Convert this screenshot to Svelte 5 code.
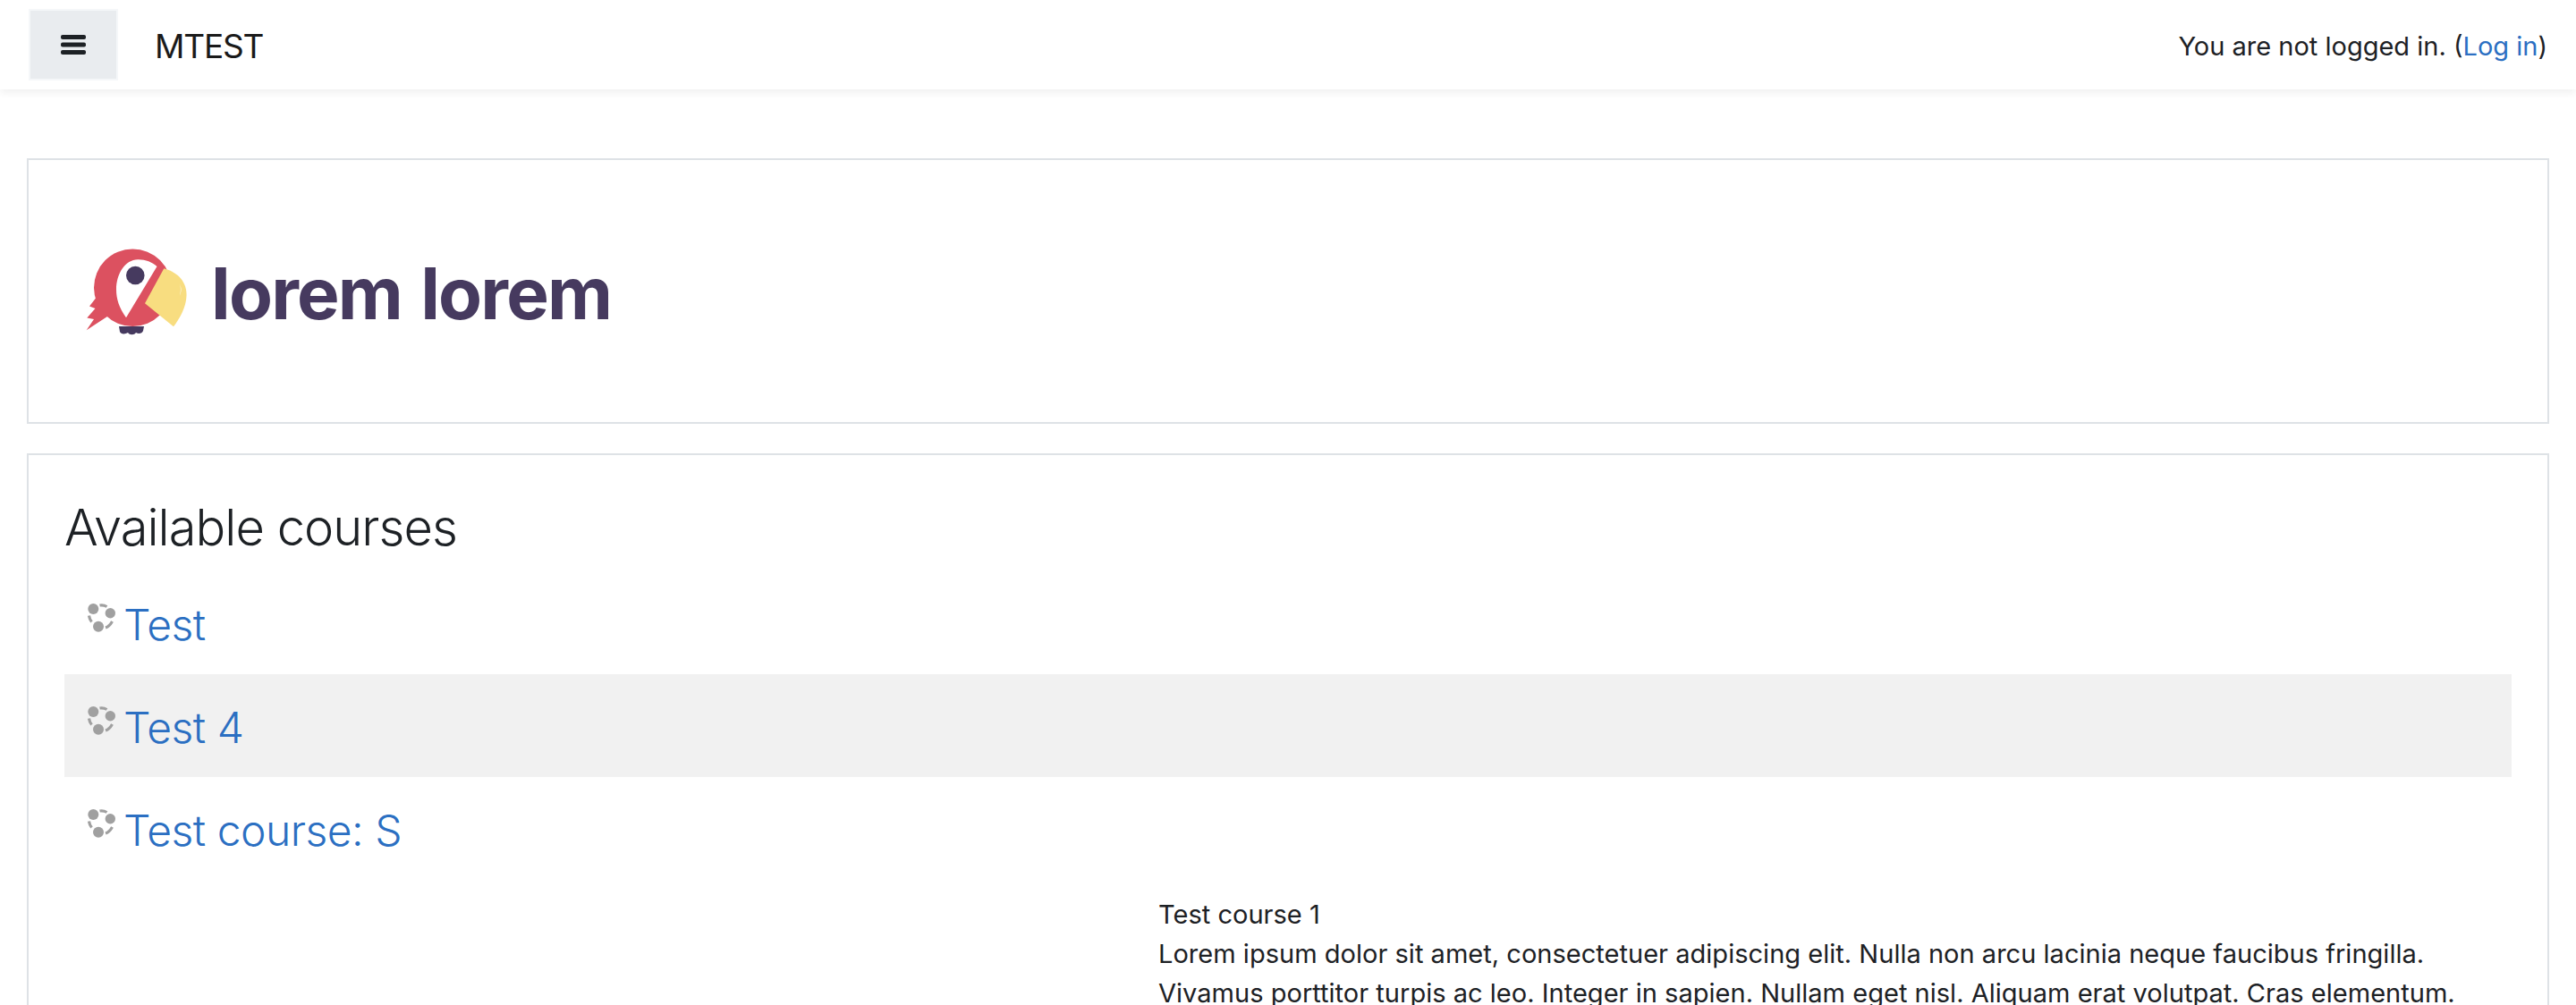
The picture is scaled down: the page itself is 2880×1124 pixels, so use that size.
<script lang="ts">
  const courses = [
    { name: 'Test', odd: false },
    { name: 'Test 4', odd: true },
    { name: 'Test course: S', odd: false },
  ];
</script>

<header class="navbar">
  <button class="toggle" aria-label="Side panel">
    <svg width="28" height="24" viewBox="0 0 28 24" aria-hidden="true">
      <rect y="1" width="28" height="5" rx="2" />
      <rect y="9.5" width="28" height="5" rx="2" />
      <rect y="18" width="28" height="5" rx="2" />
    </svg>
  </button>
  <span class="brand">MTEST</span>
  <span class="login">You are not logged in. (<a href="#login">Log in</a>)</span>
</header>

<main>
  <section class="card logo-card">
    <svg class="parrot" width="130" height="115" viewBox="0 0 130 115" aria-hidden="true">
      <path class="dark" d="M43 99h28l-1 5c-1 3-5 4-8 2-2 3-7 3-9 0-3 2-8 2-9-1z" />
      <path class="red" d="M30 88 6.700 103.300 15 91 7.300 89.500 16.500 79 10 76.500 17 67.500 28 60z" />
      <circle class="red" cx="58.300" cy="55.700" r="43.300" />
      <path class="white" d="M51 89.300C43 78 40 68 40 58 40 40 50 24.500 64 24.300 72 24 80 27 85.500 32z" />
      <circle class="dark" cx="61.300" cy="42" r="10.300" />
      <path class="beak" d="M93.300 34.300C110 39 119 50 118.500 65 118 78 111 90 104 99.300L72 73.300z" />
      <path class="white" d="M110 51c2.500 2 2.500 9 .8 14 2.200-4 2.500-11-.8-14z" />
    </svg>
    <span class="wordmark">lorem lorem</span>
  </section>

  <section class="card courses">
    <h2>Available courses</h2>
    {#each courses as course}
      <div class="course" class:odd={course.odd}>
        <svg class="course-icon" width="32" height="32" viewBox="0 0 32 32" aria-hidden="true">
          <circle cx="6.300" cy="6" r="6" />
          <circle cx="25.300" cy="10.700" r="5.700" />
          <circle cx="12" cy="25.700" r="6" />
          <path d="M13.500 2C16 1.500 19 2 21.500 3.500M1.500 13.500c.3 2.500 1.300 5 3 7M20 27c3-1 5.500-3.500 7.500-7" />
        </svg>
        <a href="#course">{course.name}</a>
      </div>
    {/each}
    <div class="summary">
      <p>Test course 1<br />Lorem ipsum dolor sit amet, consectetuer adipiscing elit. Nulla non arcu lacinia neque faucibus fringilla.<br />Vivamus porttitor turpis ac leo. Integer in sapien. Nullam eget nisl. Aliquam erat volutpat. Cras elementum.</p>
    </div>
  </section>
</main>

<style>
  :global(html), :global(body) {
    margin: 0;
    height: 1124px;
    overflow: hidden;
    background: #fff;
  }

  :global(body) {
    font-family: Inter, "Liberation Sans", sans-serif;
    font-size: 30px;
    line-height: 45px;
    color: #1d2125;
  }

  a {
    color: #2b6fc2;
    text-decoration: none;
  }

  .navbar {
    display: flex;
    align-items: center;
    height: 100px;
    padding: 0 32px;
    box-sizing: border-box;
    background: #fff;
    box-shadow: 0 4px 8px rgba(0, 0, 0, 0.06);
  }

  .toggle {
    display: flex;
    align-items: center;
    justify-content: center;
    width: 100px;
    height: 80px;
    padding: 0;
    background: #e9ecef;
    border: 2px solid #f5f7f9;
    box-sizing: border-box;
  }

  .toggle svg {
    fill: #1d2125;
  }

  .brand {
    margin-left: 41px;
    font-size: 37px;
    letter-spacing: -1.2px;
    color: #1a1a1a;
    padding-top: 2px;
  }

  .login {
    margin-left: auto;
    font-size: 29px;
    padding-top: 2px;
  }

  main {
    display: flex;
    flex-direction: column;
    gap: 33px;
    padding: 77px 30px 0;
  }

  .card {
    border: 2px solid #dee2e6;
    background: #fff;
  }

  .logo-card {
    display: flex;
    align-items: center;
    height: 297px;
    box-sizing: border-box;
    padding-left: 58px;
    padding-top: 4px;
    gap: 16px;
  }

  .parrot {
    margin-top: -8px;
  }

  .red { fill: #dc5160; }
  .white { fill: #fff; }
  .dark { fill: #463a5f; }
  .beak { fill: #f8dd80; }

  .wordmark {
    font-weight: 700;
    font-size: 80px;
    letter-spacing: -1.800px;
    word-spacing: 4px;
    line-height: 90px;
    color: #463a5f;
  }

  .courses {
    padding: 47px 40px 0;
  }

  h2 {
    margin: 0 0 15px;
    font-size: 56px;
    font-weight: 300;
    letter-spacing: -0.95px;
    line-height: 68px;
    color: #1d2125;
  }

  .course {
    display: flex;
    align-items: center;
    height: 115px;
    padding-left: 26px;
    gap: 8px;
    font-size: 48px;
    letter-spacing: -0.5px;
    font-weight: 300;
  }

  .course a {
    padding-top: 4px;
  }

  .course.odd {
    background: #f1f1f1;
  }

  .course-icon {
    margin-top: -12px;
    fill: #a0a0a0;
    stroke: none;
  }

  .course-icon path {
    fill: none;
    stroke: #a0a0a0;
    stroke-width: 3.200;
  }

  .summary {
    display: grid;
    grid-template-columns: 1223px 1fr;
    padding-top: 17px;
  }

  .summary p {
    grid-column: 2;
    margin: 0;
    font-size: 29.05px;
    line-height: 44px;
  }
</style>
